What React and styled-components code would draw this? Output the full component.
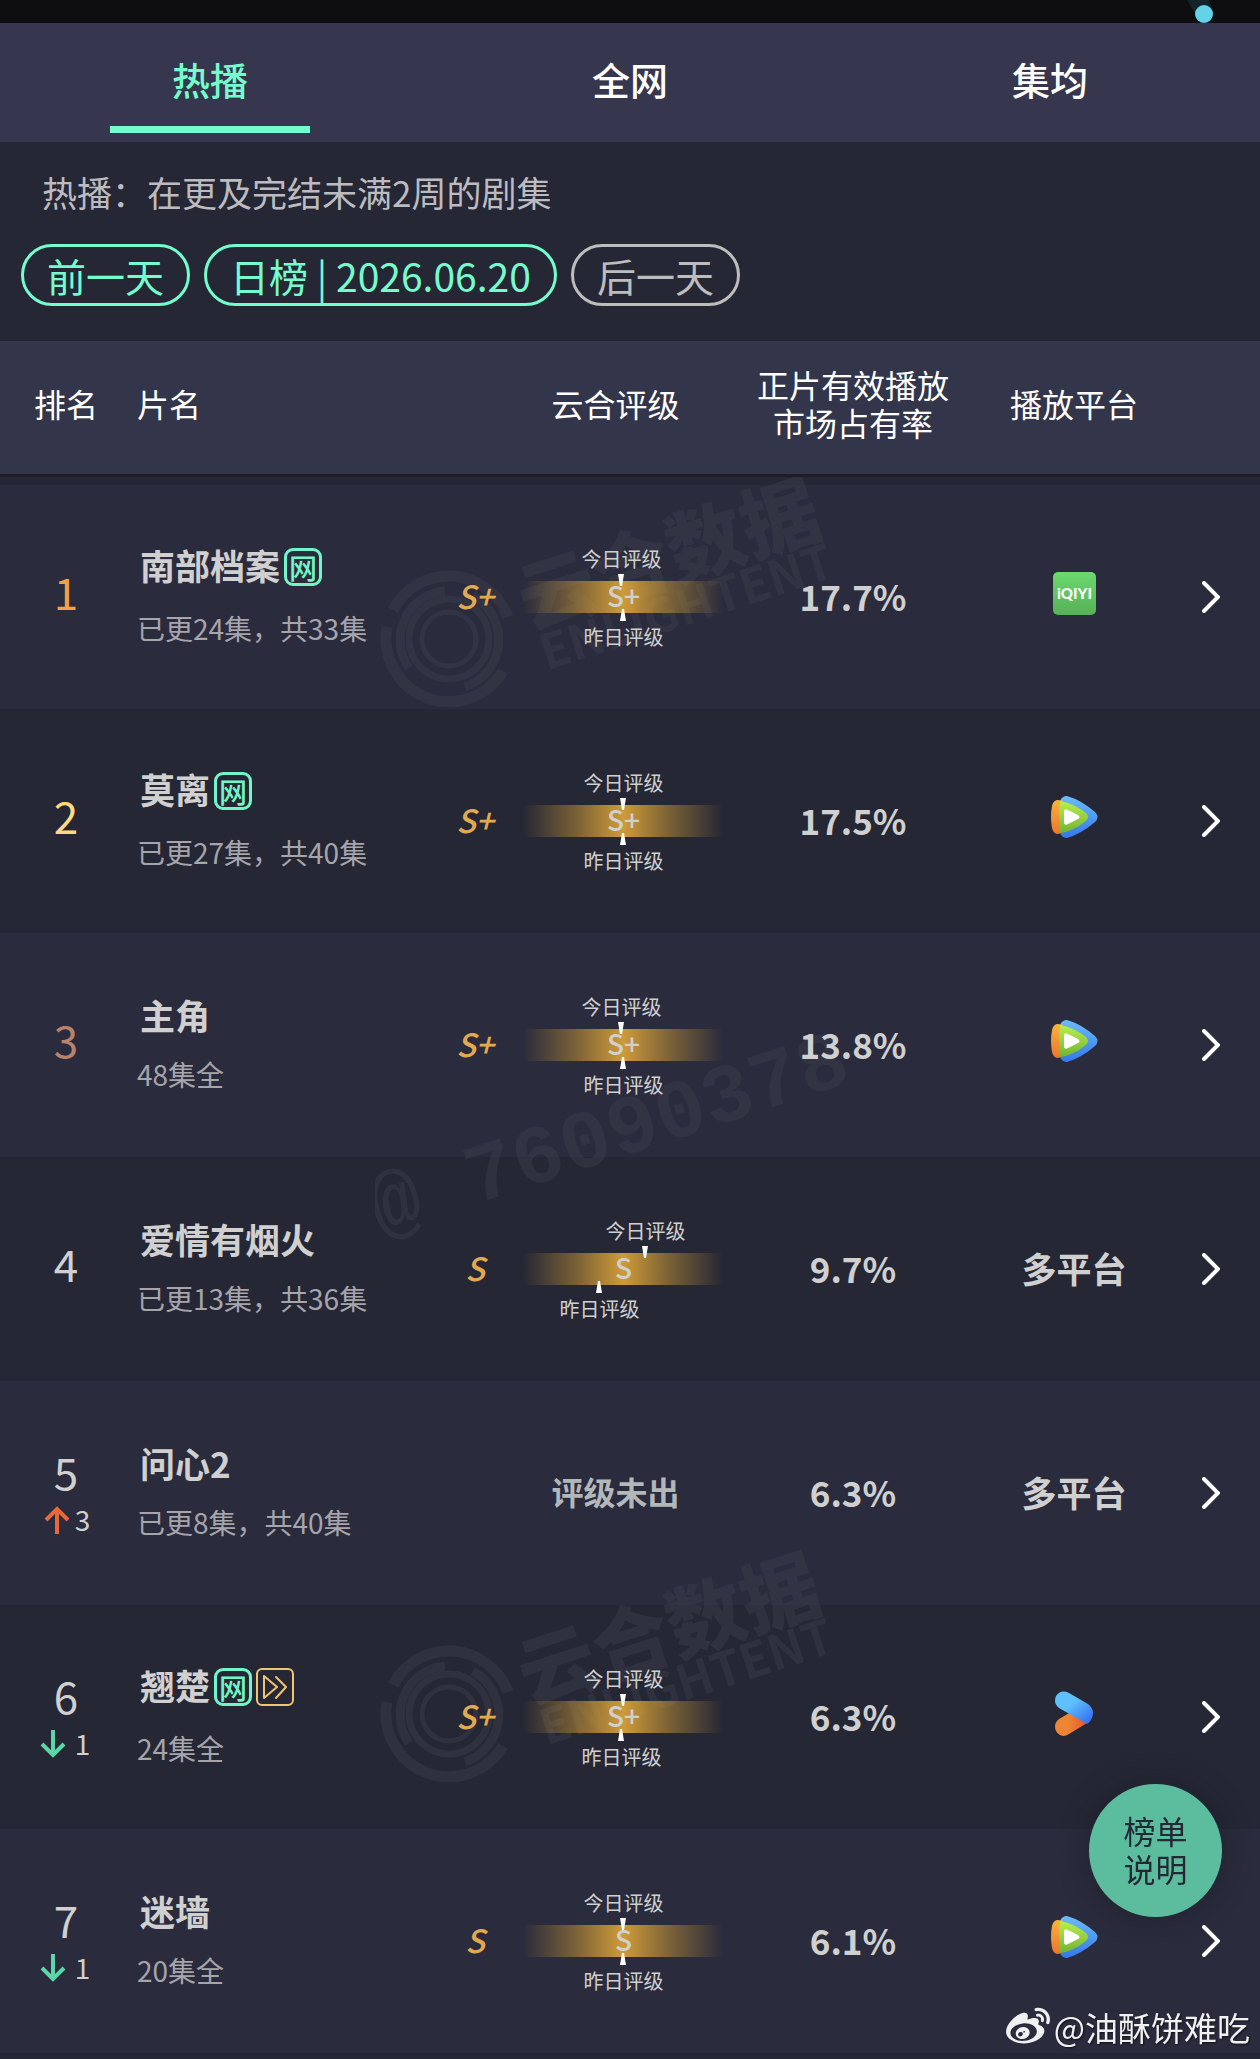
import { useState } from "react"
import styled, { createGlobalStyle } from "styled-components"
import { FaWeibo } from "react-icons/fa"

const tabs = ['热播', '全网', '集均']

const shows = [
  { rank: 1, title: '南部档案', tags: ['web'], info: '已更24集，共33集', grade: 'S+', today: 49, yesterday: 50, share: '17.7%', platform: 'iqiyi' },
  { rank: 2, title: '莫离', tags: ['web'], info: '已更27集，共40集', grade: 'S+', today: 50, yesterday: 50, share: '17.5%', platform: 'tencent' },
  { rank: 3, title: '主角', tags: [], info: '48集全', grade: 'S+', today: 49, yesterday: 50, share: '13.8%', platform: 'tencent' },
  { rank: 4, title: '爱情有烟火', tags: [], info: '已更13集，共36集', grade: 'S', today: 61, yesterday: 38, share: '9.7%', platform: '多平台' },
  { rank: 5, change: 3, title: '问心2', tags: [], info: '已更8集，共40集', share: '6.3%', platform: '多平台' },
  { rank: 6, change: -1, title: '翘楚', tags: ['web', 'fast'], info: '24集全', grade: 'S+', today: 50, yesterday: 49, share: '6.3%', platform: 'youku' },
  { rank: 7, change: -1, title: '迷墙', tags: [], info: '20集全', grade: 'S', today: 50, yesterday: 50, share: '6.1%', platform: 'tencent' },
]

const rankColors = { 1: '#f3a047', 2: '#ffd97d', 3: '#b8826b' }

const ArrowUp = () => (
  <svg width="36" height="28" viewBox="0 0 36 28" fill="none" stroke="#e8683a" strokeWidth="4">
    <path d="M18 28V3M7 14L18 3L29 14" />
  </svg>
)

const ArrowDown = () => (
  <svg width="36" height="28" viewBox="0 0 36 28" fill="none" stroke="#5cd6a6" strokeWidth="4">
    <path d="M14 0V25M3 14L14 25L25 14" />
  </svg>
)

const Iqiyi = () => (
  <svg width="43" height="43" viewBox="0 0 43 43" role="img" aria-label="爱奇艺">
    <defs>
      <linearGradient id="iq" x1="0" y1="0" x2="0" y2="1">
        <stop offset="0" stopColor="#6cd96e" />
        <stop offset="1" stopColor="#56b057" />
      </linearGradient>
    </defs>
    <rect width="43" height="43" rx="5" fill="url(#iq)" />
    <text x="21.5" y="27" textAnchor="middle" fontFamily="Lato, sans-serif" fontWeight="900" fontSize="15" fill="#fff">iQIYI</text>
  </svg>
)

const Tencent = () => (
  <svg width="47" height="42" viewBox="0 0 47 42" role="img" aria-label="腾讯视频">
    <defs>
      <linearGradient id="tb" x1="0" y1="0" x2="0" y2="1">
        <stop offset="0" stopColor="#6cbcf8" />
        <stop offset="1" stopColor="#3577ea" />
      </linearGradient>
      <linearGradient id="to" x1="0" y1="0" x2="0" y2="1">
        <stop offset="0" stopColor="#f6b43d" />
        <stop offset="1" stopColor="#ee742d" />
      </linearGradient>
      <linearGradient id="tg" x1="0" y1="0" x2="0" y2="1">
        <stop offset="0" stopColor="#b9f04a" />
        <stop offset="1" stopColor="#72b336" />
      </linearGradient>
    </defs>
    <path d="M9 5Q11 0 16 0Q30 4 44 16Q49 21 44 26Q30 38 16 42Q11 42 9 37Z" fill="url(#tb)" />
    <path d="M6 4Q2 5 1 10Q-1 21 1 32Q2 37 6 38Q9 38 12 36V5Q9 4 6 4Z" fill="url(#to)" />
    <path d="M9 5Q22 7 35 17Q39 21 35 25Q23 35 9 37Q7 21 9 5Z" fill="url(#tg)" />
    <path d="M13 15Q13 12 17 14L27 19Q30 21 27 23L17 28Q14 30 13 27Z" fill="#fff" />
  </svg>
)

const Youku = () => (
  <svg width="38" height="45" viewBox="0 0 38 45" role="img" aria-label="优酷">
    <defs>
      <linearGradient id="yb" x1="0" y1="0" x2="1" y2="1">
        <stop offset="0.4" stopColor="#5fc0fb" />
        <stop offset="1" stopColor="#2f63f2" />
      </linearGradient>
      <linearGradient id="yo" x1="0" y1="0" x2="1" y2="0">
        <stop offset="0.4" stopColor="#ec8634" />
        <stop offset="1" stopColor="#e9562c" />
      </linearGradient>
    </defs>
    <path d="M4 28L16 21L32 32L14 43Q6 48 1 40Q-2 33 4 28Z" fill="url(#yo)" />
    <path d="M4 17Q-2 12 1 5Q6 -2 14 2L33 13Q38 17 38 22Q38 29 32 33Z" fill="url(#yb)" />
  </svg>
)

const logos = { iqiyi: Iqiyi, tencent: Tencent, youku: Youku }

const Chevron = () => (
  <svg width="18" height="32" viewBox="0 0 18 32" fill="none" stroke="#fff" strokeWidth="4" strokeLinecap="round">
    <path d="M2 2L16 16L2 30" />
  </svg>
)

const FastForward = () => (
  <svg width="24" height="26" viewBox="0 0 24 26" fill="none" stroke="#f0c471" strokeWidth="2" strokeLinejoin="round" strokeLinecap="round">
    <path d="M1 2V24L14 13Z M13 3L23 13L13 24" />
  </svg>
)

const BrandMark = () => (
  <svg width="470" height="270" viewBox="0 0 470 270" aria-hidden="true">
    <g fill="none" stroke="currentColor">
      <path d="M18 152A63 63 0 0 1 133 159" strokeWidth="11" />
      <path d="M12 169A63 63 0 0 0 128 213" strokeWidth="11" />
      <path d="M70 133A49 49 0 0 0 34 210" strokeWidth="9" />
      <path d="M98 138A50 50 0 0 1 90 229" strokeWidth="9" />
      <circle cx="74" cy="181" r="40" strokeWidth="7" />
      <circle cx="74" cy="181" r="27" strokeWidth="5" />
    </g>
    <g fill="currentColor" fontFamily="'Noto Sans CJK SC', sans-serif" transform="translate(154 172) rotate(-18)">
      <text x="0" y="0" fontSize="78" fontWeight="900">云合数据</text>
      <text x="4" y="44" fontSize="48" fontWeight="700">ENLIGHTENT</text>
    </g>
  </svg>
)

const Meter = ({ grade, today, yesterday }) => (
  <Track>
    <Pointer style={{ left: `${today}%` }}>
      今日评级
      <Needle viewBox="0 0 6 12"><path d="M0 0H6L4 12H2Z" fill="#fff" /></Needle>
    </Pointer>
    {grade}
    <Pointer $below style={{ left: `${yesterday}%` }}>
      <Needle viewBox="0 0 6 12"><path d="M2 0H4L6 12H0Z" fill="#fff" /></Needle>
      昨日评级
    </Pointer>
  </Track>
)

const ShowRow = ({ show }) => {
  const Logo = logos[show.platform]

  return (
    <Row>
      <Cell>
        <Rank>
          <RankNumber $color={rankColors[show.rank]}>{show.rank}</RankNumber>
          {show.change && (
            <Change>
              {show.change > 0 ? <ArrowUp /> : <ArrowDown />}
              {Math.abs(show.change)}
            </Change>
          )}
        </Rank>
      </Cell>
      <Cell $left>
        <Name $tagged={show.tags.length > 0}>
          <Title>
            {show.title}
            {show.tags.map(tag => (
              <Tag key={tag} $gold={tag === 'fast'}>{tag === 'web' ? '网' : <FastForward />}</Tag>
            ))}
          </Title>
          <Info>{show.info}</Info>
        </Name>
      </Cell>
      {show.grade ? (
        <>
          <Cell><Grade>{show.grade}</Grade></Cell>
          <Cell><Meter {...show} /></Cell>
        </>
      ) : (
        <GradeCell colSpan="2">评级未出</GradeCell>
      )}
      <Cell><Strong>{show.share}</Strong></Cell>
      <Cell>{Logo ? <LogoBox><Logo /></LogoBox> : <Strong>{show.platform}</Strong>}</Cell>
      <Cell><More href={`#show-${show.rank}`} aria-label={`${show.title} 详情`}><Chevron /></More></Cell>
    </Row>
  )
}

const App = () => {
  const [active, setActive] = useState('热播')

  return (
    <Page>
      <GlobalStyle />
      <StatusBar>
        <svg width="44" height="23" viewBox="0 0 44 23" aria-hidden="true">
          <path d="M11 0H33L37 12L22 18Z" fill="#14252a" />
          <circle cx="28" cy="14" r="9" fill="#62d3e9" />
        </svg>
      </StatusBar>
      <Tabs>
        {tabs.map(tab => (
          <Tab key={tab} $active={tab === active} onClick={() => setActive(tab)}>{tab}</Tab>
        ))}
      </Tabs>
      <Filters>
        <Description>热播：在更及完结未满2周的剧集</Description>
        <Dates>
          <Pill>前一天</Pill>
          <Pill>日榜 | 2026.06.20</Pill>
          <Pill $muted>后一天</Pill>
        </Dates>
      </Filters>
      <Board>
        <Table>
          <colgroup>
            <Col $width={132} />
            <col />
            <Col $width={82} />
            <Col $width={215} />
            <Col $width={244} />
            <Col $width={198} />
            <Col $width={87} />
          </colgroup>
          <thead>
            <tr>
              <Head>排名</Head>
              <Head $left>片名</Head>
              <Head $grade colSpan="2">云合评级</Head>
              <Head>正片有效播放<br />市场占有率</Head>
              <Head>播放平台</Head>
              <Head />
            </tr>
          </thead>
          <Body>
            {shows.map(show => <ShowRow key={show.rank} show={show} />)}
          </Body>
        </Table>
        <Marks>
          <Mark $top={-19}><BrandMark /></Mark>
          <Mark $top={528}>
            <svg width="520" height="280" viewBox="0 0 520 280" aria-hidden="true">
              <text transform="translate(5 230) rotate(-18)" fill="currentColor" fontFamily="'Liberation Mono', monospace" fontWeight="700" fontSize="83">@ 76090378</text>
            </svg>
          </Mark>
          <Mark $top={1056}><BrandMark /></Mark>
        </Marks>
      </Board>
      <Help>榜单<br />说明</Help>
      <Credit><FaWeibo size={44} />@油酥饼难吃</Credit>
    </Page>
  )
}

export default App

const GlobalStyle = createGlobalStyle`
  * {
    box-sizing: border-box;
  }
  body {
    margin: 0;
    background: #252735;
  }
  button {
    font-family: inherit;
    cursor: pointer;
  }
`
const Page = styled.main`
  padding-bottom: 6px;
  font-family: "Noto Sans CJK SC", sans-serif;
  color: #d0d0d0;
  background: #252735;
`
const StatusBar = styled.div`
  display: flex;
  justify-content: flex-end;
  height: 23px;
  padding-right: 40px;
  background: #0e0e10;
`
const Tabs = styled.nav`
  display: flex;
  height: 119px;
  background: #36364e;
`
const Tab = styled.button`
  flex: 1;
  display: flex;
  flex-direction: column;
  align-items: center;
  padding: 26px 0 0;
  border: 0;
  background: none;
  color: ${p => p.$active ? '#75fccd' : '#fff'};
  font-size: 38px;
  font-weight: 500;
  line-height: 60px;
  &::after {
    content: "";
    width: 200px;
    height: 7px;
    margin-top: 17px;
    background: ${p => p.$active ? '#75fccd' : 'transparent'};
  }
`
const Filters = styled.section`
  padding: 24px 21px 35px;
`
const Description = styled.p`
  margin: 0 0 26px;
  padding-left: 21px;
  font-size: 35px;
  line-height: 52px;
  color: #bcbcc0;
`
const Dates = styled.div`
  display: flex;
  gap: 14px;
`
const Pill = styled.button`
  height: 62px;
  padding: 0 23px;
  border: 3px solid;
  border-radius: 31px;
  background: none;
  color: ${p => p.$muted ? '#bdbdbd' : '#75fccd'};
  font-size: 39px;
  line-height: 54px;
  white-space: nowrap;
`
const Board = styled.section`
  position: relative;
`
const Table = styled.table`
  width: 100%;
  table-layout: fixed;
  border-collapse: separate;
  border-spacing: 0;
`
const Col = styled.col`
  width: ${p => p.$width}px;
`
const Head = styled.th`
  height: 136px;
  padding: 0 0 10px ${p => p.$left ? 5 : p.$grade ? 66 : 0}px;
  border-bottom: 3px solid #1c1d29;
  background: #33354a;
  color: #fff;
  font-size: 32px;
  font-weight: 400;
  line-height: 38px;
  text-align: ${p => p.$left ? 'left' : 'center'};
  white-space: nowrap;
`
const Body = styled.tbody`
  &::before {
    content: "";
    display: block;
    height: 8px;
  }
`
const Row = styled.tr`
  height: 224px;
  &:nth-child(odd) {
    background: #2a2b3c;
  }
`
/* cell contents sit above the watermarks, row backgrounds below them */
const Cell = styled.td`
  padding: 0 0 0 ${p => p.$left ? 5 : 0}px;
  text-align: ${p => p.$left ? 'left' : 'center'};
  white-space: nowrap;
  & > * {
    position: relative;
    z-index: 1;
  }
`
const GradeCell = styled(Cell)`
  padding: 0 0 4px 66px;
  color: #b2b7ba;
  font-size: 32px;
  font-weight: 700;
`
const Rank = styled.div`
  display: flex;
  flex-direction: column;
  align-items: center;
`
const RankNumber = styled.span`
  color: ${p => p.$color || '#d0d0d0'};
  font-size: 44px;
  line-height: 52px;
  &:only-child {
    padding-bottom: 12px;
  }
`
const Change = styled.span`
  display: flex;
  align-items: center;
  padding-right: 3px;
  font-size: 28px;
  line-height: 44px;
  svg {
    margin-top: 2px;
  }
`
const Name = styled.div`
  display: flex;
  flex-direction: column;
  gap: ${p => p.$tagged ? 20 : 16}px;
`
const Title = styled.div`
  display: flex;
  align-items: center;
  gap: 4px;
  padding-left: 3px;
  font-size: 35px;
  font-weight: 700;
  line-height: 42px;
`
const Tag = styled.span`
  display: flex;
  align-items: center;
  justify-content: center;
  width: 38px;
  height: 38px;
  margin-top: 4px;
  border: ${p => p.$gold ? '2px solid #f0c471' : '3px solid #72f5c8'};
  border-radius: ${p => p.$gold ? 6 : 9}px;
  color: #72f5c8;
  font-size: 28px;
  font-weight: 500;
  line-height: 28px;
`
const Info = styled.div`
  font-size: 28px;
  line-height: 44px;
  color: #a5a5ab;
`
const Grade = styled.div`
  padding-bottom: 4px;
  color: #e3a94f;
  font-size: 32px;
  font-style: italic;
  font-weight: 500;
`
const Track = styled.div`
  position: relative;
  width: 200px;
  height: 32px;
  margin: 0 auto;
  background: linear-gradient(90deg, rgba(207, 155, 52, 0), rgba(207, 155, 52, 0.5) 27%, #cf9b38 50%, rgba(207, 155, 52, 0.5) 73%, rgba(207, 155, 52, 0));
  font-size: 28px;
  font-weight: 500;
  line-height: 28px;
`
const Pointer = styled.div`
  position: absolute;
  ${p => p.$below ? 'top: 28px;' : 'bottom: 27px;'}
  display: flex;
  flex-direction: column;
  align-items: center;
  transform: translateX(-50%);
  font-size: 20px;
  font-weight: 400;
  line-height: ${p => p.$below ? 32 : 30}px;
`
const Needle = styled.svg`
  width: 6px;
  height: 12px;
`
const Strong = styled.strong`
  display: block;
  padding-bottom: 4px;
  font-size: 35px;
  font-weight: 700;
`
const LogoBox = styled.div`
  display: flex;
  justify-content: center;
  padding-bottom: 8px;
`
const More = styled.a`
  display: flex;
  justify-content: center;
  padding-right: 12px;
`
const Marks = styled.div`
  position: absolute;
  top: 136px;
  right: 0;
  bottom: 0;
  left: 0;
  overflow: hidden;
  pointer-events: none;
  color: rgba(67, 70, 84, 0.34);
`
const Mark = styled.div`
  position: absolute;
  top: ${p => p.$top}px;
  left: 375px;
`
const Help = styled.button`
  position: fixed;
  z-index: 2;
  right: 38px;
  bottom: 142px;
  width: 133px;
  height: 133px;
  padding: 0 0 4px;
  border: 0;
  border-radius: 50%;
  background: #5cbd9e;
  box-shadow: 0 0 30px rgba(20, 20, 30, 0.4);
  color: #252735;
  font-size: 32px;
  line-height: 38px;
`
const Credit = styled.div`
  position: fixed;
  z-index: 2;
  right: 10px;
  bottom: 7px;
  display: flex;
  align-items: center;
  gap: 4px;
  color: #f0f0f0;
  font-size: 33px;
  line-height: 50px;
  text-shadow: 1px 1px 2px rgba(0, 0, 0, 0.6);
`
